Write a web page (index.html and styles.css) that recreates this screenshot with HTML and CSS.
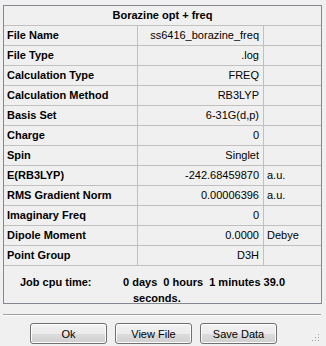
FILE: index.html
```
<!DOCTYPE html>
<html lang="en">
<head>
    <meta charset="UTF-8">
    <title>Borazine opt + freq</title>
    <link rel="stylesheet" href="styles.css">
</head>
<body>
    <div class="panel">
        <div class="title-row">Borazine opt + freq</div>

        <div class="row"><div class="label">File Name</div><div class="value">ss6416_borazine_freq</div><div class="unit"></div></div>
        <div class="row"><div class="label">File Type</div><div class="value">.log</div><div class="unit"></div></div>
        <div class="row"><div class="label">Calculation Type</div><div class="value">FREQ</div><div class="unit"></div></div>
        <div class="row"><div class="label">Calculation Method</div><div class="value">RB3LYP</div><div class="unit"></div></div>
        <div class="row"><div class="label">Basis Set</div><div class="value">6-31G(d,p)</div><div class="unit"></div></div>
        <div class="row"><div class="label">Charge</div><div class="value">0</div><div class="unit"></div></div>
        <div class="row"><div class="label">Spin</div><div class="value">Singlet</div><div class="unit"></div></div>
        <div class="row"><div class="label">E(RB3LYP)</div><div class="value">-242.68459870</div><div class="unit">a.u.</div></div>
        <div class="row"><div class="label">RMS Gradient Norm</div><div class="value">0.00006396</div><div class="unit">a.u.</div></div>
        <div class="row"><div class="label">Imaginary Freq</div><div class="value">0</div><div class="unit"></div></div>
        <div class="row"><div class="label">Dipole Moment</div><div class="value">0.0000</div><div class="unit">Debye</div></div>
        <div class="row"><div class="label">Point Group</div><div class="value">D3H</div><div class="unit"></div></div>

        <div class="cpu-time">
            <span class="cpu-label">Job cpu time:</span>
            <div class="cpu-value">
                <div>0 days&nbsp; 0 hours&nbsp; 1 minutes 39.0</div>
                <div class="cpu-wrap">seconds.</div>
            </div>
        </div>
    </div>

    <div class="separator"></div>

    <div class="buttons">
        <button class="btn">Ok</button>
        <button class="btn">View File</button>
        <button class="btn">Save Data</button>
    </div>

    <div class="grip">
        <svg width="8" height="8" viewBox="0 0 8 8">
            <rect x="6" y="0" width="1" height="1" fill="#a0a0a0"/>
            <rect x="3" y="3" width="1" height="1" fill="#a0a0a0"/>
            <rect x="6" y="3" width="1" height="1" fill="#a0a0a0"/>
            <rect x="0" y="6" width="1" height="1" fill="#a0a0a0"/>
            <rect x="3" y="6" width="1" height="1" fill="#a0a0a0"/>
            <rect x="6" y="6" width="1" height="1" fill="#a0a0a0"/>
        </svg>
    </div>
</body>
</html>
```

FILE: styles.css
```
* {
    margin: 0;
    padding: 0;
    box-sizing: border-box;
}

body {
    font-family: 'Liberation Sans', Arial, sans-serif;
    font-size: 11px;
    color: #000;
    background: #f0f0f0;
    width: 326px;
    height: 346px;
    position: relative;
    overflow: hidden;
}

.panel {
    margin: 5px 0 0 3px;
    width: 319px;
    border: 1px solid #828790;
}

.title-row {
    height: 20px;
    line-height: 19px;
    text-align: center;
    font-weight: bold;
    border-bottom: 1px solid #c0c0c0;
}

.row {
    display: grid;
    grid-template-columns: 134px 126px 57px;
    height: 20px;
    line-height: 19px;
    border-bottom: 1px solid #c0c0c0;
}

.label {
    font-weight: bold;
    padding-left: 3px;
    border-right: 1px solid #c0c0c0;
    white-space: nowrap;
}

.value {
    text-align: right;
    padding-right: 4px;
    border-right: 1px solid #c0c0c0;
    white-space: nowrap;
}

.unit {
    padding-left: 3px;
}

.cpu-time {
    display: flex;
    height: 37px;
    padding-top: 8px;
    font-weight: bold;
    line-height: 16px;
}

.cpu-label {
    padding-left: 16px;
    width: 119px;
}

.cpu-wrap {
    padding-left: 10px;
}

.separator {
    margin: 10px 5px 0 3px;
    border-top: 1px solid #a0a0a0;
    border-bottom: 1px solid #fff;
}

.buttons {
    display: flex;
    gap: 8px;
    margin: 7px 0 0 30px;
}

.btn {
    width: 77px;
    height: 21px;
    font-family: 'Liberation Sans', Arial, sans-serif;
    font-size: 11px;
    color: #000;
    border: 1px solid #707070;
    border-radius: 3px;
    background: linear-gradient(#f2f2f2 0%, #ebebeb 50%, #dddddd 51%, #cfcfcf 100%);
    box-shadow: inset 0 0 0 1px #fcfcfc;
}

.btn + .btn {
    width: 77px;
}

.grip {
    position: absolute;
    right: 6px;
    bottom: 4px;
    line-height: 0;
}
```
